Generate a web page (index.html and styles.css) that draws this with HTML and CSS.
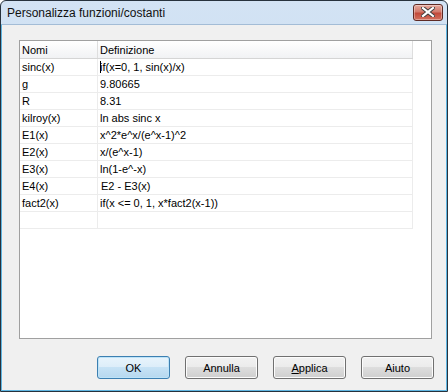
FILE: index.html
```html
<!DOCTYPE html>
<html lang="it">

<head>
  <meta charset="UTF-8" />
  <title>Personalizza funzioni/costanti</title>
  <link rel="stylesheet" href="styles.css">
</head>

<body>
  <div class="window">
    <div class="titlebar">
      <span class="title">Personalizza funzioni/costanti</span>
      <button class="close" type="button">
        <svg width="14" height="10" viewBox="0 0 14 10">
          <path d="M2 1 L12 9 M12 1 L2 9" stroke="#3d3d3d" stroke-width="4" stroke-linecap="square" />
          <path d="M2 1 L12 9 M12 1 L2 9" stroke="#ffffff" stroke-width="2.2" stroke-linecap="square" />
        </svg>
      </button>
    </div>
    <div class="client">
      <div class="grid">
        <div class="row head">
          <div class="name">Nomi</div>
          <div class="def">Definizione</div>
        </div>
        <div class="row">
          <div class="name">sinc(x)</div>
          <div class="def"><span class="caret"></span>if(x=0, 1, sin(x)/x)</div>
        </div>
        <div class="row">
          <div class="name">g</div>
          <div class="def">9.80665</div>
        </div>
        <div class="row">
          <div class="name">R</div>
          <div class="def">8.31</div>
        </div>
        <div class="row">
          <div class="name">kilroy(x)</div>
          <div class="def">ln abs sinc x</div>
        </div>
        <div class="row">
          <div class="name">E1(x)</div>
          <div class="def">x^2*e^x/(e^x-1)^2</div>
        </div>
        <div class="row">
          <div class="name">E2(x)</div>
          <div class="def">x/(e^x-1)</div>
        </div>
        <div class="row">
          <div class="name">E3(x)</div>
          <div class="def">ln(1-e^-x)</div>
        </div>
        <div class="row">
          <div class="name">E4(x)</div>
          <div class="def indent">E2 - E3(x)</div>
        </div>
        <div class="row">
          <div class="name">fact2(x)</div>
          <div class="def">if(x &lt;= 0, 1, x*fact2(x-1))</div>
        </div>
        <div class="row">
          <div class="name"></div>
          <div class="def"></div>
        </div>
      </div>
      <div class="buttons">
        <button type="button" class="btn default">OK</button>
        <button type="button" class="btn">Annulla</button>
        <button type="button" class="btn"><u>A</u>pplica</button>
        <button type="button" class="btn">Aiuto</button>
      </div>
    </div>
  </div>
</body>

</html>
```

FILE: styles.css
```css
body {
  margin: 0;
  font-family: "Liberation Sans", Arial, sans-serif;
}

.window {
  width: 448px;
  height: 392px;
  box-sizing: border-box;
  border: 1px solid #27323d;
  border-radius: 6px 6px 0 0;
  background: linear-gradient(#d3e3f4, #b8d0e9);
  display: flex;
  flex-direction: column;
}

.titlebar {
  height: 23px;
  display: flex;
  align-items: center;
  justify-content: space-between;
  padding-left: 6px;
}

.title {
  font-size: 12px;
  color: #111;
}

.close {
  width: 30px;
  height: 17px;
  margin: 0 4px 1px 0;
  padding: 0;
  border: 1px solid #5e2a24;
  border-radius: 3px;
  background: linear-gradient(#e6aa9e, #d27a6c 45%, #c24a3b 55%, #d3715f);
  box-shadow: inset 0 0 0 1px rgba(255, 255, 255, 0.35);
  display: flex;
  align-items: center;
  justify-content: center;
}

.client {
  flex-grow: 1;
  background-color: #f0f0f0;
  border: 1px solid #5fb6e2;
  border-top: 1px solid #a3bcd6;
  display: flex;
  flex-direction: column;
}

.grid {
  width: 413px;
  height: 299px;
  box-sizing: border-box;
  margin: 15px 0 0 17px;
  border: 1px solid #a0a0a0;
  background-color: #fff;
  font-size: 11px;
  color: #000;
}

.row {
  display: flex;
  height: 17px;
  box-sizing: border-box;
  border-bottom: 1px solid #ececec;
  width: 393px;
}

.row div {
  line-height: 16px;
  padding-left: 2px;
  box-sizing: border-box;
  border-right: 1px solid #ececec;
  white-space: nowrap;
  overflow: hidden;
}

.name {
  width: 78px;
}

.def {
  width: 315px;
}

.def.indent {
  padding-left: 3px;
}

.row.head {
  height: 18px;
  background: linear-gradient(#ffffff, #f1f2f4);
  border-bottom: 1px solid #d5d5d5;
}

.row.head div {
  line-height: 17px;
  padding-top: 1px;
  border-right-color: #dedede;
}

.caret {
  display: inline-block;
  width: 1px;
  height: 12px;
  background: #000;
  margin-right: -1px;
  vertical-align: -2px;
}

.buttons {
  display: flex;
  justify-content: flex-end;
  gap: 15px;
  margin-top: 17px;
  padding-right: 12px;
}

.btn {
  width: 73px;
  height: 23px;
  padding: 0;
  font-family: "Liberation Sans", Arial, sans-serif;
  font-size: 11px;
  color: #000;
  border: 1px solid #707070;
  border-radius: 3px;
  background: linear-gradient(#f2f2f2, #ebebeb 50%, #dddddd 50%, #cfcfcf);
  box-shadow: inset 0 0 0 1px #fcfcfc;
}

.btn.default {
  border-color: #3c7fb1;
  background: linear-gradient(#e8f4fc, #dcedf9 50%, #c6e2f5 50%, #b6d8ef);
  box-shadow: inset 0 0 0 1px #bde3f8;
}
```
